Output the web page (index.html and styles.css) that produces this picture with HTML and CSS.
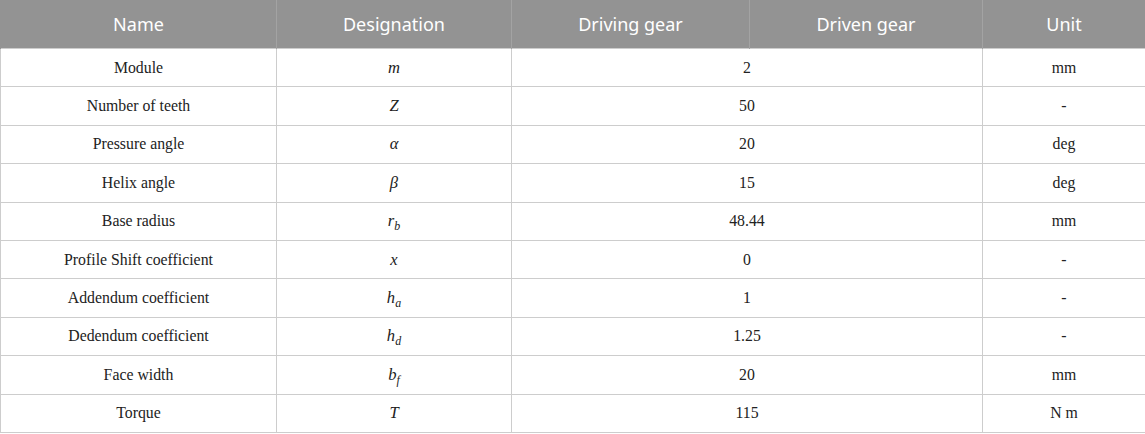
FILE: index.html
```html
<!DOCTYPE html>
<html>
<head>
<meta charset="utf-8">
<link rel="stylesheet" href="styles.css">
</head>
<body>
<table class="gear-table">
  <colgroup>
    <col class="c-name"><col class="c-des"><col class="c-drv"><col class="c-dvn"><col class="c-unit">
  </colgroup>
  <thead>
    <tr>
      <th>Name</th>
      <th>Designation</th>
      <th>Driving gear</th>
      <th>Driven gear</th>
      <th>Unit</th>
    </tr>
  </thead>
  <tbody>
    <tr><td>Module</td><td><i class="m">m</i></td><td colspan="2">2</td><td>mm</td></tr>
    <tr><td>Number of teeth</td><td><i class="m">Z</i></td><td colspan="2">50</td><td>-</td></tr>
    <tr><td>Pressure angle</td><td><i class="m">α</i></td><td colspan="2">20</td><td>deg</td></tr>
    <tr><td>Helix angle</td><td><i class="m">β</i></td><td colspan="2">15</td><td>deg</td></tr>
    <tr><td>Base radius</td><td><i class="m">r<sub>b</sub></i></td><td colspan="2">48.44</td><td>mm</td></tr>
    <tr><td>Profile Shift coefficient</td><td><i class="m">x</i></td><td colspan="2">0</td><td>-</td></tr>
    <tr><td>Addendum coefficient</td><td><i class="m">h<sub>a</sub></i></td><td colspan="2">1</td><td>-</td></tr>
    <tr><td>Dedendum coefficient</td><td><i class="m">h<sub>d</sub></i></td><td colspan="2">1.25</td><td>-</td></tr>
    <tr><td>Face width</td><td><i class="m">b<sub>f</sub></i></td><td colspan="2">20</td><td>mm</td></tr>
    <tr><td>Torque</td><td><i class="m">T</i></td><td colspan="2">115</td><td>N m</td></tr>
  </tbody>
</table>
</body>
</html>
```
FILE: styles.css
```css
html, body {
  margin: 0;
  padding: 0;
  background: #fff;
}
.gear-table {
  width: 1145px;
  border-collapse: collapse;
  table-layout: fixed;
}
.c-name { width: 276px; }
.c-des { width: 235px; }
.c-drv { width: 238px; }
.c-dvn { width: 233px; }
.c-unit { width: 163px; }
.gear-table th {
  height: 48px;
  padding: 0;
  background: #939393;
  color: #fff;
  font-family: "Noto Sans", "Open Sans", sans-serif;
  font-size: 18px;
  font-weight: 400;
  text-align: center;
  vertical-align: middle;
  border-left: 1px solid #a3a3a3;
  border-right: 1px solid #a3a3a3;
}
.gear-table th:first-child { border-left: 1px solid #939393; }
.gear-table th:last-child { border-right: 1px solid #939393; }
.gear-table tbody tr { height: 38.4px; }
.gear-table td {
  padding: 0;
  text-align: center;
  vertical-align: middle;
  font-family: "Liberation Serif", "DejaVu Serif", serif;
  font-size: 15.8px;
  color: #222;
  border: 1px solid #cdcdcd;
}
.m {
  font-style: italic;
  font-size: 1.05em;
}
.m sub {
  font-size: 0.72em;
  vertical-align: -0.3em;
  line-height: 0;
}
```
